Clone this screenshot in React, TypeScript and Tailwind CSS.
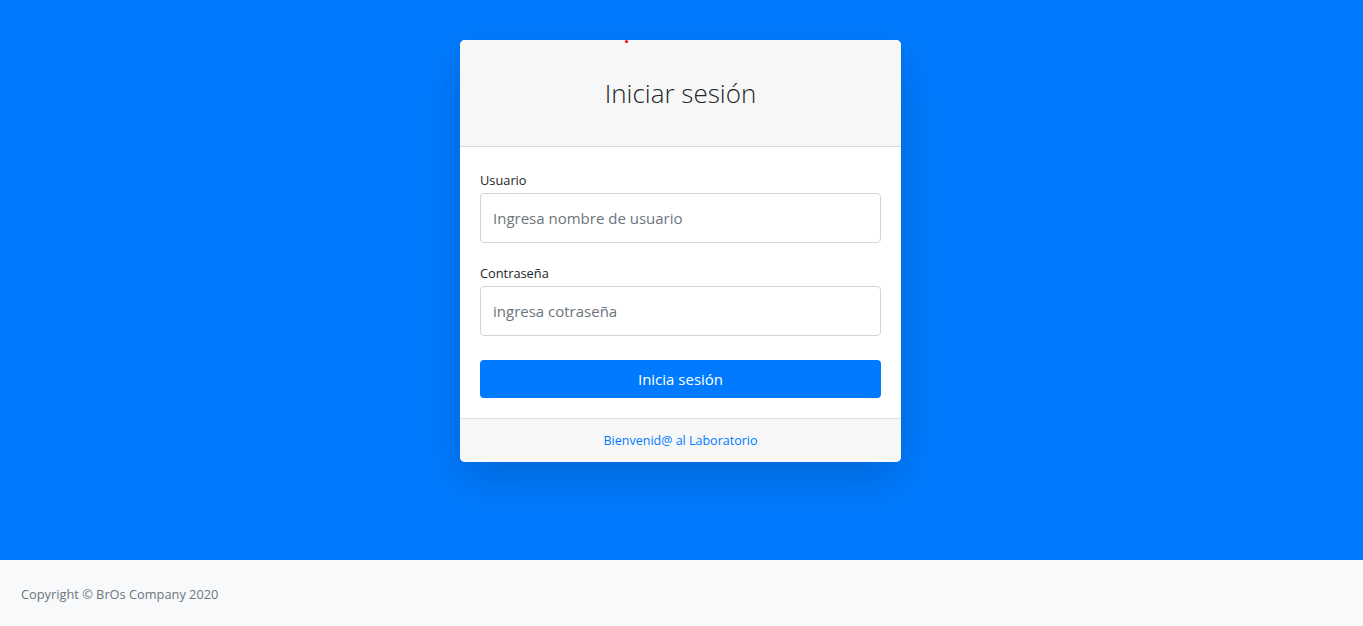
import React from "react";

export default function App() {
  const font = { fontFamily: '"Open Sans", "Noto Sans", sans-serif' };
  return (
    <div className="min-h-[626px] flex flex-col text-[#212529]" style={font}>
      <div className="h-[560px] bg-[#007bff] pt-10 flex justify-center pr-[2px]">
        <div className="relative w-[441px] h-[422px] bg-white rounded-[5px] shadow-[0_16px_48px_rgba(0,0,0,0.175)] flex flex-col overflow-hidden">
          <div className="h-[107px] bg-[#f7f7f7] border-b border-[rgba(0,0,0,0.125)] flex items-center justify-center">
            <h3 className="text-[26px] font-light leading-[34px] text-[#212529]">Iniciar sesión</h3>
          </div>
          <span className="absolute z-10 left-[165px] top-0 w-[3px] h-[3px] rounded-full bg-[#ff0000]" />
          <div className="px-5 pt-[23px] pb-5 border-b border-[rgba(0,0,0,0.125)]">
            <label className="block text-[12.8px] leading-[20px] mb-[3px]">Usuario</label>
            <input
              className="block w-full h-[50px] px-3 text-[15px] rounded-[4px] border border-[#ced4da] placeholder:text-[#6c757d] outline-none"
              placeholder="Ingresa nombre de usuario"
              style={font}
            />
            <label className="block mt-5 text-[12.8px] leading-[20px] mb-[3px]">Contraseña</label>
            <input
              type="password"
              className="block w-full h-[50px] px-3 text-[15px] rounded-[4px] border border-[#ced4da] placeholder:text-[#6c757d] outline-none"
              placeholder="ingresa cotraseña"
              style={font}
            />
            <button
              className="mt-6 w-full h-[38px] rounded-[4px] bg-[#007bff] text-white text-[15px]"
              style={font}
            >
              Inicia sesión
            </button>
          </div>
          <div className="flex-1 bg-[#f7f7f7] flex items-center justify-center pt-[2px]">
            <a className="text-[12.5px] text-[#007bff]">Bienvenid@ al Laboratorio</a>
          </div>
        </div>
      </div>
      <div className="h-[66px] bg-[#f8f9fa] flex items-center px-[21px] pt-[4px]">
        <span className="text-[12.8px] text-[#6c757d]">Copyright © BrOs Company 2020</span>
      </div>
    </div>
  );
}
